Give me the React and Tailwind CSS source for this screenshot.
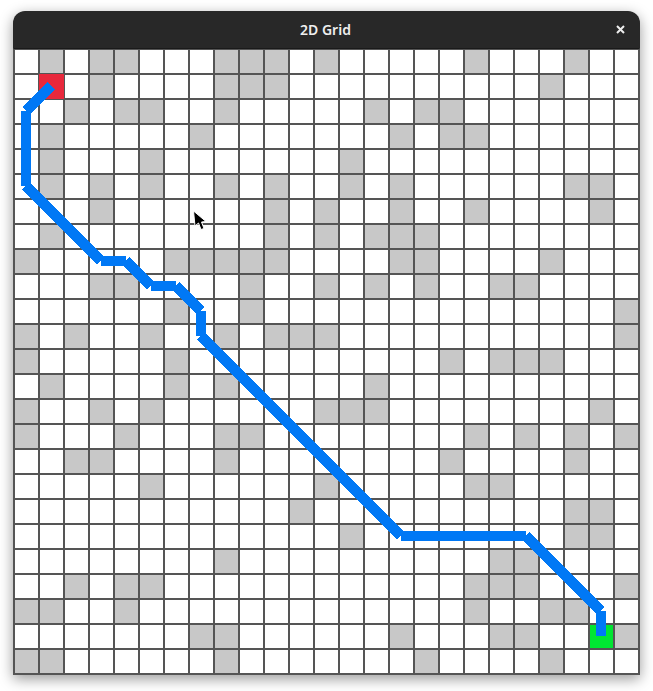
// Grey (blocked) columns for each row of the 25x25 board
const WALLS = [
  [1, 3, 4, 8, 9, 10, 12, 18, 22],
  [3, 8, 9, 10, 21],
  [2, 4, 5, 8, 14, 16, 17],
  [1, 7, 15, 17, 18],
  [1, 5, 13],
  [1, 3, 5, 8, 10, 13, 15, 22, 23],
  [3, 10, 12, 15, 18, 23],
  [1, 10, 12, 14, 15, 16],
  [0, 6, 7, 8, 9, 10, 15, 16, 21],
  [3, 4, 9, 12, 14, 16, 19, 20],
  [6, 9, 24],
  [0, 2, 5, 8, 10, 11, 12, 24],
  [0, 6, 17, 19, 20, 21],
  [1, 6, 8, 14],
  [0, 3, 5, 12, 13, 14, 23],
  [0, 4, 8, 9, 18, 20, 22, 24],
  [2, 3, 8, 17, 22],
  [5, 12, 18, 19],
  [11, 22, 23],
  [13, 22, 23],
  [8, 19, 20],
  [2, 4, 5, 18, 19, 20, 24],
  [0, 1, 4, 18, 21, 22],
  [7, 8, 15, 19, 20, 24],
  [0, 1, 8, 16, 21],
];

// Path as [col, row] points
const PATH = [
  [1, 1], [0, 2], [0, 5], [3, 8], [4, 8], [5, 9], [6, 9], [7, 10],
  [7, 11], [15, 19], [20, 19], [23, 22], [23, 23],
];

function Cell({ col, row }) {
  let color = 'bg-white';
  if (WALLS[row].includes(col)) color = 'bg-[#c8c8c8]';
  if (col === 1 && row === 1) color = 'bg-[#e8283c] border-[#e8283c]';
  if (col === 23 && row === 23) color = 'bg-[#00e632] border-[#00e632]';
  return <div className={`h-[25px] w-[25px] border border-[#555555] ${color}`} />;
}

function PathOverlay() {
  return (
    <svg className="absolute left-0 top-0" width="625" height="625" shapeRendering="crispEdges">
      {PATH.slice(1).map(([col, row], i) => (
        <line
          key={i}
          x1={12 + PATH[i][0] * 25}
          y1={12 + PATH[i][1] * 25}
          x2={12 + col * 25}
          y2={12 + row * 25}
          stroke="#0078f5"
          strokeWidth="10"
        />
      ))}
    </svg>
  );
}

function MouseCursor() {
  return (
    <svg className="absolute left-[177px] top-[160px]" width="16" height="24" viewBox="0 0 16 24">
      <path
        d="M2.5 2 L4 17 L7.5 14 L10 20.5 L13 19.5 L10.5 13 L15 12.5 Z"
        fill="#000"
        stroke="#fff"
        strokeWidth="1"
        strokeLinejoin="round"
      />
    </svg>
  );
}

export default function App() {
  return (
    <div className="h-[691px] w-[653px] overflow-hidden bg-white pl-[13px] pt-[11px]">
      <div className="w-[627px] rounded-t-[12px] shadow-[0_4px_14px_rgba(0,0,0,0.4)]">
        <div className="relative flex h-[37px] items-center justify-center rounded-t-[12px] bg-[#282828] pr-[2px]">
          <span className="text-[14px] font-semibold text-[#eeeeee] [font-family:'Noto_Sans',sans-serif]">2D Grid</span>
          <svg className="absolute right-[15px] top-[14px]" width="9" height="9" viewBox="0 0 9 9">
            <path d="M1 1 L8 8 M8 1 L1 8" stroke="#eeeeee" strokeWidth="2" />
          </svg>
        </div>
        <div className="relative grid grid-cols-[repeat(25,25px)] border border-[#555555] border-t-[#1a1a1a]">
          {WALLS.map((_, row) =>
            WALLS.map((_, col) => <Cell key={`${row}-${col}`} col={col} row={row} />)
          )}
          <PathOverlay />
          <MouseCursor />
        </div>
      </div>
    </div>
  );
}
